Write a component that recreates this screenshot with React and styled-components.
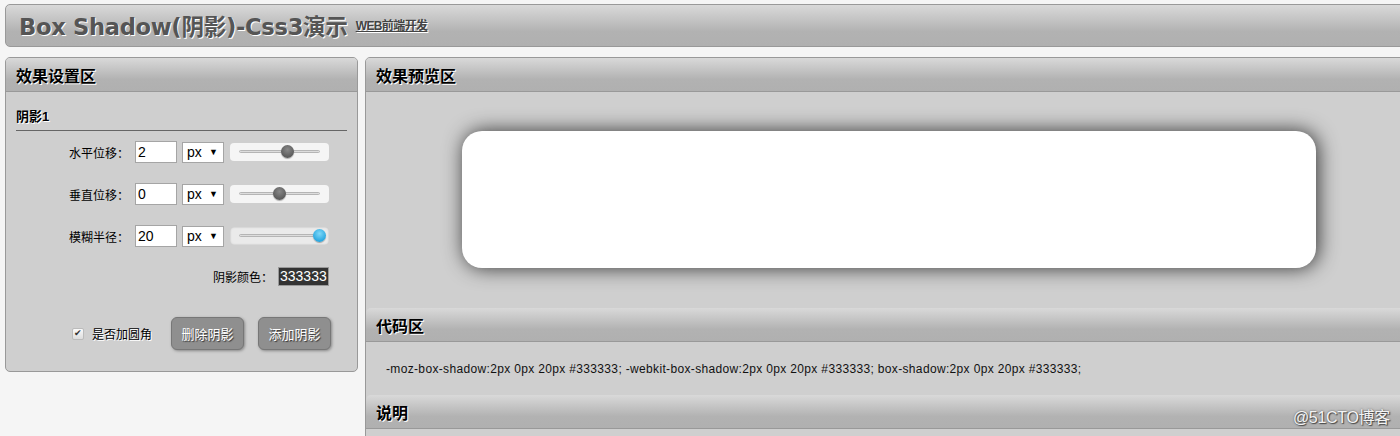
import React from "react";
import styled, { createGlobalStyle } from "styled-components";

const Global = createGlobalStyle`
  html, body { margin: 0; padding: 0; }
  body {
    background: #f5f5f5;
    font-family: "Liberation Sans", "Noto Sans CJK SC", sans-serif;
    overflow: hidden;
    width: 1400px;
    height: 436px;
  }
`;

const Page = styled.div`
  position: relative;
  padding: 4px 0 0 5px;
  width: 1420px;
  height: 436px;
  box-sizing: border-box;
`;

const barGradient = `linear-gradient(to bottom, #d9d9d9 0%, #c4c4c4 35%, #b2b2b2 65%, #b0b0b0 100%)`;

const TopBar = styled.header`
  height: 41px;
  border: 1px solid #999;
  border-radius: 5px;
  background: ${barGradient};
  display: flex;
  align-items: center;
  padding-left: 13px;
  gap: 8px;
`;

const Title = styled.h1`
  margin: 0;
  font-family: "DejaVu Sans", "Noto Sans CJK SC", sans-serif;
  font-size: 22.6px;
  font-weight: bold;
  color: #555;
  text-shadow: 1px 1px 0 #fff;
  letter-spacing: -0.3px;
`;

const SubLink = styled.a`
  font-size: 12px;
  font-weight: bold;
  color: #444;
  text-decoration: underline;
  text-shadow: 1px 1px 0 #fff;
  align-self: flex-start;
  margin-top: 11px;
  letter-spacing: -0.6px;
`;

const Main = styled.div`
  display: flex;
  gap: 7px;
  margin-top: 10px;
  align-items: flex-start;
`;

const Panel = styled.section`
  border: 1px solid #999;
  border-radius: 5px;
  background: #cfcfcf;
  box-sizing: border-box;
  width: ${(p) => p.$w}px;
  height: ${(p) => p.$h}px;
  overflow: hidden;
  flex-shrink: 0;
`;

const PanelHead = styled.div`
  height: 33px;
  border-bottom: 1px solid #999;
  border-radius: ${(p) => (p.$round ? "5px 5px 0 0" : "0")};
  background: ${barGradient};
  display: flex;
  align-items: center;
  padding-left: 10px;
  font-size: 16px;
  font-weight: bold;
  color: #000;
  text-shadow: 1px 1px 0 #fff;
`;

const SettingsBody = styled.div`
  padding: 14px 10px 0 10px;
`;

const GroupTitle = styled.div`
  font-size: 13px;
  font-weight: bold;
  padding-bottom: 5px;
  border-bottom: 1px solid #666;
  text-shadow: 1px 1px 0 #fff;
  margin-bottom: 10px;
`;

const FieldRow = styled.div`
  display: flex;
  align-items: center;
  height: 22px;
  margin-bottom: 20px;
`;

const Label = styled.label`
  width: 113px;
  padding-right: 6px;
  text-align: right;
  font-size: 12px;
  color: #000;
`;

const TextInput = styled.input`
  width: 42px;
  height: 22px;
  box-sizing: border-box;
  border: 1px solid #a5a5a5;
  background: #fff;
  font-family: "Liberation Sans", sans-serif;
  font-size: 14px;
  padding: 0 2px;
  margin: 0;
  outline: none;
`;

const SelectBox = styled.div`
  width: 42px;
  height: 21px;
  box-sizing: border-box;
  border: 1px solid #a5a5a5;
  background: #fff;
  margin-left: 5px;
  display: flex;
  align-items: center;
  justify-content: space-between;
  padding: 0 5px 0 4px;
  font-size: 14px;
`;

const Arrow = styled.span`
  font-size: 9px;
`;

const SliderBox = styled.div`
  width: 99px;
  height: 18px;
  margin-left: 6px;
  border-radius: 4px;
  background: ${(p) => (p.$sunken ? "#eaeaea" : "#f5f5f5")};
  box-shadow: ${(p) => (p.$sunken ? "inset 0 0 2px #aaa" : "none")};
  position: relative;
`;

const Track = styled.div`
  position: absolute;
  left: 9px;
  right: 9px;
  top: 7px;
  height: 3px;
  border-radius: 2px;
  background: #ddd;
  border: 1px solid #b5b5b5;
  box-sizing: border-box;
`;

const Knob = styled.div`
  position: absolute;
  top: 2px;
  width: 13px;
  height: 13px;
  border-radius: 50%;
  background: ${(p) =>
    p.$active
      ? "radial-gradient(circle at 50% 35%, #7fd8f8 0%, #2aa8e0 70%, #1a8cc0 100%)"
      : "radial-gradient(circle at 50% 35%, #888 0%, #555 80%)"};
  box-shadow: 0 1px 1px rgba(0,0,0,0.3);
`;

const ColorRow = styled.div`
  display: flex;
  align-items: center;
  justify-content: flex-end;
  padding-right: 18px;
  height: 19px;
  margin-top: 3px;
  gap: 5px;
`;

const ColorLabel = styled.span`
  font-size: 12px;
`;

const ColorInput = styled.div`
  width: 51px;
  height: 19px;
  box-sizing: border-box;
  border: 1px solid #999;
  background: #333;
  color: #fff;
  font-size: 14px;
  line-height: 17px;
  padding-left: 1px;
`;

const ActionRow = styled.div`
  display: flex;
  align-items: center;
  margin-top: 31px;
  padding-left: 56px;
  white-space: nowrap;
`;

const Check = styled.span`
  flex-shrink: 0;
  width: 10px;
  height: 10px;
  border: 1px solid #bbb;
  border-radius: 2px;
  background: linear-gradient(#fafafa, #ddd);
  display: inline-flex;
  align-items: center;
  justify-content: center;
  font-size: 9px;
  color: #333;
  line-height: 1;
`;

const CheckLabel = styled.span`
  flex-shrink: 0;
  font-size: 12px;
  margin-left: 8px;
  margin-right: 19px;
  text-shadow: 1px 1px 0 #fff;
`;

const Btn = styled.button`
  flex-shrink: 0;
  width: 73px;
  height: 33px;
  border: 1px solid #777;
  border-radius: 6px;
  background: #8f8f8f;
  color: #fff;
  font-family: "Liberation Sans", "Noto Sans CJK SC", sans-serif;
  font-size: 13px;
  text-shadow: 1px 1px 1px #333;
  box-shadow: 1px 1px 3px rgba(0,0,0,0.35);
  margin-right: 14px;
  padding: 0;
`;

const PreviewArea = styled.div`
  padding: 39px 0 40px 96px;
`;

const ShadowBox = styled.div`
  width: 854px;
  height: 137px;
  background: #fff;
  border-radius: 20px;
  box-shadow: 2px 0px 20px #333333;
`;

const CodeArea = styled.div`
  height: 53px;
  display: flex;
  align-items: center;
  padding-left: 20px;
  font-size: 12px;
  letter-spacing: 0.34px;
  color: #111;
  white-space: nowrap;
`;

const Watermark = styled.div`
  position: absolute;
  right: 30px;
  top: 404px;
  font-size: 16px;
  color: #f4f4f4;
  text-shadow: 0 0 2px #555, 1px 1px 1px #444;
  letter-spacing: -0.3px;
`;

const Slider = ({ pos, active, sunken }) => (
  <SliderBox $sunken={sunken}>
    <Track />
    <Knob $active={active} style={{ left: `${pos}px` }} />
  </SliderBox>
);

export default function App() {
  const rows = [
    { label: "水平位移：", val: "2", pos: 51 },
    { label: "垂直位移：", val: "0", pos: 43 },
    { label: "模糊半径：", val: "20", pos: 83, active: true, sunken: true },
  ];
  return (
    <Page>
      <Global />
      <TopBar>
        <Title>Box Shadow(阴影)-Css3演示</Title>
        <SubLink href="#">WEB前端开发</SubLink>
      </TopBar>
      <Main>
        <Panel $w={353} $h={315}>
          <PanelHead>效果设置区</PanelHead>
          <SettingsBody>
            <GroupTitle>阴影1</GroupTitle>
            {rows.map((r) => (
              <FieldRow key={r.label}>
                <Label>{r.label}</Label>
                <TextInput defaultValue={r.val} />
                <SelectBox>
                  px<Arrow>▼</Arrow>
                </SelectBox>
                <Slider pos={r.pos} active={r.active} sunken={r.sunken} />
              </FieldRow>
            ))}
            <ColorRow>
              <ColorLabel>阴影颜色：</ColorLabel>
              <ColorInput>333333</ColorInput>
            </ColorRow>
            <ActionRow>
              <Check>✔</Check>
              <CheckLabel>是否加圆角</CheckLabel>
              <Btn>删除阴影</Btn>
              <Btn>添加阴影</Btn>
            </ActionRow>
          </SettingsBody>
        </Panel>
        <Panel $w={1060} $h={400}>
          <PanelHead>效果预览区</PanelHead>
          <PreviewArea>
            <ShadowBox />
          </PreviewArea>
          <PanelHead $round>代码区</PanelHead>
          <CodeArea>
            -moz-box-shadow:2px 0px 20px #333333; -webkit-box-shadow:2px 0px 20px #333333; box-shadow:2px 0px 20px #333333;
          </CodeArea>
          <PanelHead $round>说明</PanelHead>
        </Panel>
      </Main>
      <Watermark>@51CTO博客</Watermark>
    </Page>
  );
}
